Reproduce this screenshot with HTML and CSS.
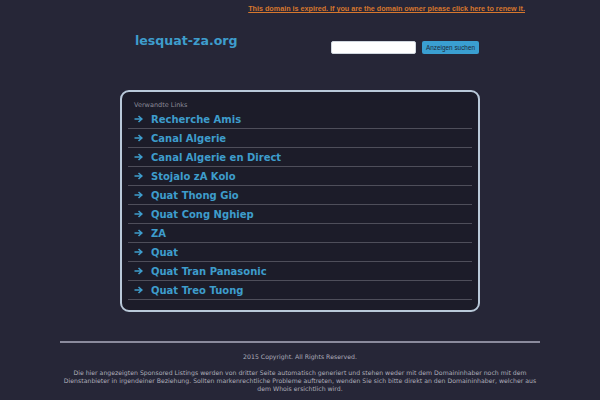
FILE: index.html
```html
<!DOCTYPE html>
<html>
<head>
<meta charset="utf-8">
<link rel="stylesheet" href="styles.css">
</head>
<body>
<div class="topbar"><a href="#">This domain is expired. If you are the domain owner please click here to renew it.</a></div>
<div class="wrap">
  <div class="header">
    <div class="logo">lesquat-za.org</div>
    <form class="search">
      <span class="input"></span>
      <span class="btn">Anzeigen suchen</span>
    </form>
  </div>
  <div class="box">
    <div class="caption">Verwandte Links</div>
    <ul class="links">
      <li><svg class="arr" viewBox="0 0 9 8"><path d="M0.5 4H7.5M4.5 1L7.8 4L4.5 7"/></svg><a href="#">Recherche Amis</a></li>
      <li><svg class="arr" viewBox="0 0 9 8"><path d="M0.5 4H7.5M4.5 1L7.8 4L4.5 7"/></svg><a href="#">Canal Algerie</a></li>
      <li><svg class="arr" viewBox="0 0 9 8"><path d="M0.5 4H7.5M4.5 1L7.8 4L4.5 7"/></svg><a href="#">Canal Algerie en Direct</a></li>
      <li><svg class="arr" viewBox="0 0 9 8"><path d="M0.5 4H7.5M4.5 1L7.8 4L4.5 7"/></svg><a href="#">Stojalo zA Kolo</a></li>
      <li><svg class="arr" viewBox="0 0 9 8"><path d="M0.5 4H7.5M4.5 1L7.8 4L4.5 7"/></svg><a href="#">Quat Thong Gio</a></li>
      <li><svg class="arr" viewBox="0 0 9 8"><path d="M0.5 4H7.5M4.5 1L7.8 4L4.5 7"/></svg><a href="#">Quat Cong Nghiep</a></li>
      <li><svg class="arr" viewBox="0 0 9 8"><path d="M0.5 4H7.5M4.5 1L7.8 4L4.5 7"/></svg><a href="#">ZA</a></li>
      <li><svg class="arr" viewBox="0 0 9 8"><path d="M0.5 4H7.5M4.5 1L7.8 4L4.5 7"/></svg><a href="#">Quat</a></li>
      <li><svg class="arr" viewBox="0 0 9 8"><path d="M0.5 4H7.5M4.5 1L7.8 4L4.5 7"/></svg><a href="#">Quat Tran Panasonic</a></li>
      <li><svg class="arr" viewBox="0 0 9 8"><path d="M0.5 4H7.5M4.5 1L7.8 4L4.5 7"/></svg><a href="#">Quat Treo Tuong</a></li>
    </ul>
  </div>
</div>
<div class="footer">
  <p class="copy">2015 Copyright. All Rights Reserved.</p>
  <p class="disc">Die hier angezeigten Sponsored Listings werden von dritter Seite automatisch generiert und stehen weder mit dem Domaininhaber noch mit dem Dienstanbieter in irgendeiner Beziehung. Sollten markenrechtliche Probleme auftreten, wenden Sie sich bitte direkt an den Domaininhaber, welcher aus dem Whois ersichtlich wird.</p>
  <p class="priv">Privacy Policy</p>
</div>
</body>
</html>
```
FILE: styles.css
```css
html, body {
  margin: 0;
  padding: 0;
  background: #262637;
  font-family: "DejaVu Sans", sans-serif;
}
.topbar {
  height: 18px;
  text-align: right;
  padding-right: 75px;
  font-family: "Liberation Sans", Arial, sans-serif;
  font-size: 7.2px;
  font-weight: bold;
  line-height: 18px;
}
.topbar a {
  color: #d6772e;
  text-decoration: underline;
}
.wrap {
  width: 360px;
  margin: 0 auto;
}
.header {
  display: flex;
  justify-content: space-between;
  align-items: flex-start;
  height: 72px;
}
.logo {
  padding-left: 15px;
  padding-top: 15px;
  color: #3e9dcc;
  font-weight: bold;
  font-size: 12.6px;
  line-height: 16px;
}
.search {
  display: flex;
  align-items: center;
  gap: 6px;
  margin: 23px 1px 0 0;
}
.input {
  display: block;
  width: 83px;
  height: 11px;
  background: #fff;
  border: 1px solid #cfd6de;
  border-radius: 2px;
}
.btn {
  display: block;
  background: #3a9fd1;
  color: #1d2a3a;
  font-family: "Liberation Sans", Arial, sans-serif;
  font-size: 6.4px;
  line-height: 13px;
  padding: 0 4px;
  border-radius: 2px;
}
.box {
  box-sizing: border-box;
  width: 360px;
  height: 222px;
  border: 2px solid #b9c9d9;
  border-radius: 9px;
  background: #1c1c29;
  padding: 9px 6px 0 6px;
}
.caption {
  color: #8b8b98;
  font-size: 6.5px;
  line-height: 9px;
  padding-left: 6px;
}
.links {
  list-style: none;
  margin: 0;
  padding: 0;
}
.links li {
  display: flex;
  align-items: center;
  height: 18px;
  border-bottom: 1px solid #4e4e5a;
  padding-left: 6px;
}
.arr {
  width: 9px;
  height: 8px;
  margin-right: 8px;
  fill: none;
  stroke: #3e9dcc;
  stroke-width: 1.6;
}
.links a {
  color: #3e9dcc;
  font-weight: bold;
  font-size: 10px;
  text-decoration: none;
}
.footer {
  width: 480px;
  margin: 29px auto 0;
  border-top: 2px solid #8a8a9c;
  text-align: center;
  color: #adadb9;
  font-size: 6.2px;
  line-height: 8px;
}
.footer p {
  margin: 0;
}
.copy {
  padding-top: 10px;
}
.disc {
  padding-top: 8px;
}
.priv {
  padding-top: 8px;
}
```
